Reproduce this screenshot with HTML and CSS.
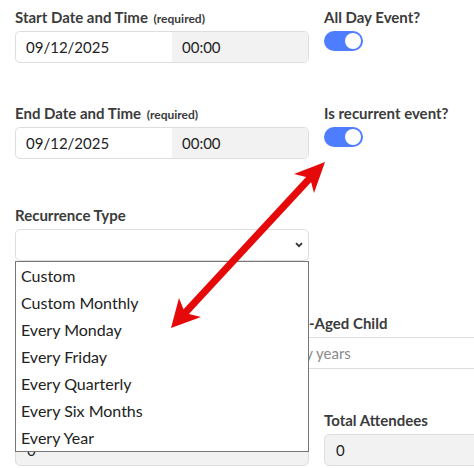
FILE: index.html
```html
<!DOCTYPE html>
<html lang="en">
<head>
<meta charset="UTF-8" />
<meta name="viewport" content="width=device-width, initial-scale=1" />
<title>Event details</title>
<link rel="stylesheet" href="styles.css">
</head>
<body>
  <div class="form">
    <div class="row row-first">
      <div class="field">
        <label>Start Date and Time <small>(required)</small></label>
        <div class="datetime">
          <span class="date">09/12/2025</span>
          <span class="time">00:00</span>
        </div>
      </div>
      <div class="field">
        <label>All Day Event?</label>
        <span class="toggle"></span>
      </div>
    </div>

    <div class="row row-second">
      <div class="field">
        <label>End Date and Time <small>(required)</small></label>
        <div class="datetime">
          <span class="date">09/12/2025</span>
          <span class="time">00:00</span>
        </div>
      </div>
      <div class="field">
        <label>Is recurrent event?</label>
        <span class="toggle"></span>
      </div>
    </div>

    <div class="row row-third">
      <div class="field">
        <label>Recurrence Type</label>
        <div class="select">
          <svg class="chevron" width="8" height="6" viewBox="0 0 8 6">
            <path d="M1 1.2 L4 4.2 L7 1.2" fill="none" stroke="#333" stroke-width="1.8" />
          </svg>
          <ul class="options">
            <li>Custom</li>
            <li>Custom Monthly</li>
            <li>Every Monday</li>
            <li>Every Friday</li>
            <li>Every Quarterly</li>
            <li>Every Six Months</li>
            <li>Every Year</li>
          </ul>
        </div>
      </div>
    </div>

    <div class="row-wide">
      <div class="field field-age">
        <label>-Aged Child</label>
        <div class="input placeholder">by years</div>
      </div>
    </div>

    <div class="row">
      <div class="field">
        <label>&nbsp;</label>
        <div class="input readonly">0</div>
      </div>
      <div class="field">
        <label>Total Attendees</label>
        <div class="input readonly">0</div>
      </div>
    </div>
  </div>

  <!-- annotation arrow -->
  <svg class="arrow" width="474" height="468" viewBox="0 0 474 468">
    <line x1="184" y1="314" x2="311" y2="177" stroke="#e50909" stroke-width="7" />
    <polygon points="325,162 294,174 310,178 314,193" fill="#e50909" />
    <polygon points="171,328 179,298 185,313 201,317" fill="#e50909" />
  </svg>
</body>
</html>
```

FILE: styles.css
```css
body {
  margin: 0;
  font-family: Lato, 'Open Sans', sans-serif;
  color: #222;
  background: #fff;
  overflow: hidden;
}
.form {
  width: 620px;
  padding: 8px 0 0 15px;
}
.row {
  display: grid;
  grid-template-columns: 294px 294px;
  column-gap: 15px;
}
.row-first {
  margin-bottom: 41px;
}
.row-second {
  margin-bottom: 47px;
}
.row-third {
  margin-bottom: 53px;
}
.row-wide {
  margin-bottom: 42px;
}
/* only the tail of this field shows past the open list */
.field-age {
  margin-left: 294px;
}
.field-age .input {
  margin-left: -24px;
}
label {
  display: block;
  font-size: 15px;
  line-height: 18px;
  font-weight: 700;
  color: #3b3b3b;
  margin-bottom: 5px;
  white-space: nowrap;
}
label small {
  font-size: 12px;
  line-height: 1;
  margin-left: 2px;
}
.datetime, .input, .select {
  box-sizing: border-box;
  height: 32px;
  border: 1px solid #dedede;
  border-radius: 5px;
  font-size: 15px;
}
.datetime {
  display: flex;
  overflow: hidden;
}
.date {
  width: 146px;
  padding-left: 10px;
  display: flex;
  align-items: center;
}
.time {
  flex: 1;
  padding-left: 10px;
  background: #f2f2f2;
  display: flex;
  align-items: center;
}
.input {
  display: flex;
  align-items: center;
  padding-left: 11px;
}
.readonly {
  background: #f2f2f2;
}
.placeholder {
  color: #8a8a8a;
  border-radius: 0;
}
.toggle {
  display: block;
  position: relative;
  width: 39px;
  height: 20px;
  margin-top: 1px;
  border-radius: 10px;
  background: #4f7dff;
}
.toggle::after {
  content: "";
  position: absolute;
  top: 2px;
  right: 2px;
  width: 16px;
  height: 16px;
  border-radius: 50%;
  background: #fff;
}
.select {
  position: relative;
}
.chevron {
  position: absolute;
  right: 5px;
  top: 12px;
}
.options {
  position: absolute;
  left: -1px;
  top: 31px;
  width: 294px;
  box-sizing: border-box;
  margin: 0;
  padding: 0;
  list-style: none;
  background: #fff;
  border: 1px solid #767676;
  z-index: 2;
}
.options li {
  font-size: 16px;
  line-height: 27px;
  padding-left: 5px;
  color: #222;
}
.arrow {
  position: absolute;
  top: 0;
  left: 0;
  pointer-events: none;
  z-index: 3;
}
```
